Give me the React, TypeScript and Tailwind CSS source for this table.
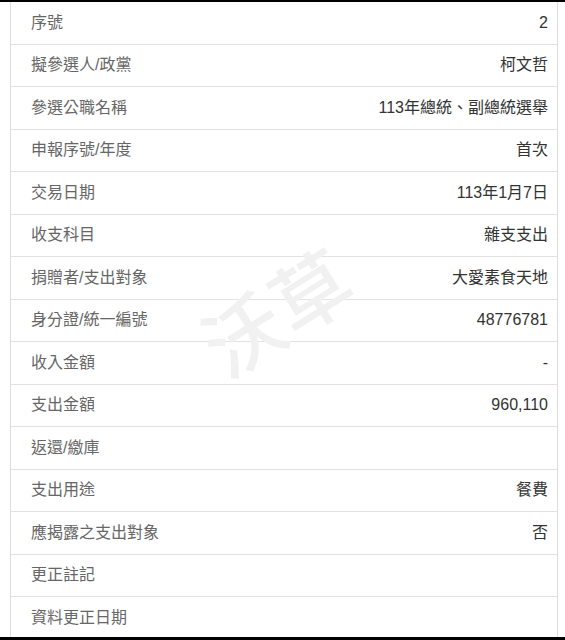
import React from 'react';

const rows: [string, string][] = [
  ['序號', '2'],
  ['擬參選人/政黨', '柯文哲'],
  ['參選公職名稱', '113年總統、副總統選舉'],
  ['申報序號/年度', '首次'],
  ['交易日期', '113年1月7日'],
  ['收支科目', '雜支支出'],
  ['捐贈者/支出對象', '大愛素食天地'],
  ['身分證/統一編號', '48776781'],
  ['收入金額', '-'],
  ['支出金額', '960,110'],
  ['返還/繳庫', ''],
  ['支出用途', '餐費'],
  ['應揭露之支出對象', '否'],
  ['更正註記', ''],
  ['資料更正日期', ''],
];

export default function App() {
  return (
    <div
      className="relative w-[565px] h-[640px] overflow-hidden bg-white border-t-2 border-black"
      style={{ fontFamily: '"Liberation Sans", "Noto Sans CJK TC", sans-serif' }}
    >
      <div className="ml-[10px] w-[548px] border-x border-[#dedede]">
        {rows.map(([label, value], i) => (
          <div
            key={i}
            className={`flex items-center justify-between h-[42.5px] pl-[20px] pr-[9px] ${i < rows.length - 1 ? 'border-b border-[#e2e2e2]' : ''}`}
          >
            <span className="text-[16px] text-[#666]">{label}</span>
            <span className="text-[16px] text-[#333]">{value}</span>
          </div>
        ))}
      </div>
      <div className="pointer-events-none absolute left-[200px] top-[255px] -rotate-[32deg] text-[78px] font-medium tracking-[2px] text-[#f1f1f1] select-none">
        沃草
      </div>
      <div className="absolute left-0 right-0 bottom-0 h-[3px] bg-black" />
    </div>
  );
}
